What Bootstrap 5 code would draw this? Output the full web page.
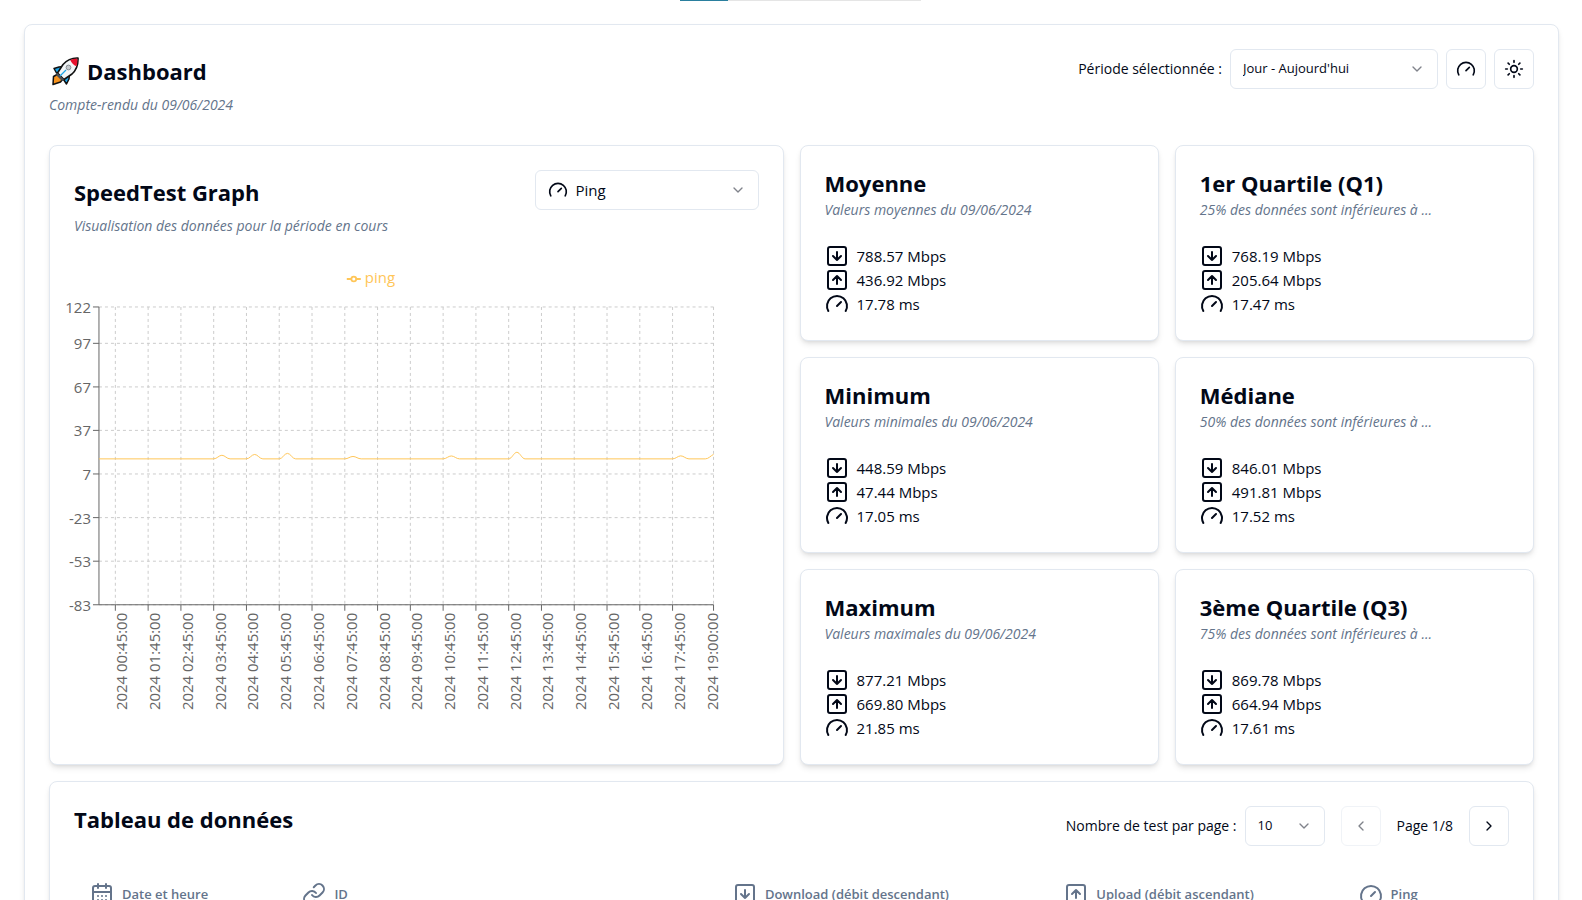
<!DOCTYPE html>
<html lang="fr">
<head>
<meta charset="utf-8">
<meta name="viewport" content="width=device-width, initial-scale=1">
<title>Dashboard</title>
<link rel="stylesheet" href="https://cdn.jsdelivr.net/npm/bootstrap@5.3.0/dist/css/bootstrap.min.css">
<style>
  :root { --line: #e2e8f0; --ink: #020817; --muted: #64748b; }
  body { font-family: "Open Sans", "Noto Sans", sans-serif; font-size: 15px; line-height: 24px; color: var(--ink); background: #fff; }
  .shell { padding: 24px 23px 24px 24px; }
  .panel { --bs-card-border-color: var(--line); --bs-card-border-radius: 8px; --bs-card-inner-border-radius: 7px; --bs-card-color: var(--ink);
    box-shadow: 0 4px 6px -1px rgba(0,0,0,.1), 0 2px 4px -2px rgba(0,0,0,.1); }
  .title { font-size: 22px; line-height: 26px; font-weight: 700; margin: 0; }
  .head-row { height: 42px; padding-top: 2px; }
  .sub { font-size: 14px; line-height: 20px; font-style: italic; color: var(--muted); margin: 4px 0 0; }
  .top-head { margin-bottom: 30px; }
  .tight { font-size: 14px; }
  .dash-grid { display: grid; grid-template-columns: repeat(4, minmax(0, 1fr)); gap: 16px; }
  .graph-panel { grid-column: span 2; grid-row: span 3; }
  .pick { height: 40px; border: 1px solid var(--line); border-radius: 6px; padding: 0 36px 0 12px; color: var(--ink); font-size: 13px;
    background-image: url("data:image/svg+xml,%3Csvg xmlns='http://www.w3.org/2000/svg' viewBox='0 0 24 24' fill='none' stroke='%23020817' stroke-opacity='.5' stroke-width='2' stroke-linecap='round' stroke-linejoin='round'%3E%3Cpath d='m6 9 6 6 6-6'/%3E%3C/svg%3E");
    background-size: 16px 16px; background-position: right 12px center; }
  .pick-period { width: 208px; }
  .pick-metric { width: 224px; padding-left: 40px; font-size: 15px; }
  .pick-rows { width: 80px; }
  .pick-icon { left: 13px; top: 10px; pointer-events: none; }
  .btn-icon { width: 40px; height: 40px; padding: 0; border: 1px solid var(--line); border-radius: 6px; color: var(--ink); background: #fff;
    display: inline-flex; align-items: center; justify-content: center; }
  .btn-icon:disabled { opacity: .5; border-color: var(--line); color: var(--ink); }
  .ico { width: 24px; height: 24px; fill: none; stroke: currentColor; stroke-width: 2; stroke-linecap: round; stroke-linejoin: round; flex: none; }
  .ico-20 { width: 20px; height: 20px; }
  .ico-16 { width: 16px; height: 16px; }
  .rocket { width: 30px; height: 30px; flex: none; }
  .load-bar { height: 1px; width: 241px; left: 43%; border-radius: 0; background: #e5e5e5; }
  .load-bar .progress-bar { background: #2a7f9e; }
  .data-table { table-layout: fixed; --bs-table-bg: transparent; border-color: var(--line); }
  .data-table th { height: 48px; padding: 0 16px; font-size: 13px; font-weight: 600; color: var(--muted); white-space: nowrap; vertical-align: middle; }
  .chart { display: block; width: 100%; height: auto; font-size: 15px; }
</style>
</head>
<body>
<svg class="d-none" aria-hidden="true">
  <symbol id="i-down" viewBox="0 0 24 24"><rect x="3" y="3" width="18" height="18" rx="2"/><path d="M12 8v8m-4-4 4 4 4-4"/></symbol>
  <symbol id="i-up" viewBox="0 0 24 24"><rect x="3" y="3" width="18" height="18" rx="2"/><path d="m16 12-4-4-4 4m4 4V8"/></symbol>
  <symbol id="i-gauge" viewBox="0 0 24 24"><path d="m12 14 4-4M3.34 19a10 10 0 1 1 17.32 0"/></symbol>
  <symbol id="i-sun" viewBox="0 0 24 24"><circle cx="12" cy="12" r="4"/><path d="M12 2v2m0 16v2M4.93 4.93l1.41 1.41m11.32 11.32 1.41 1.41M2 12h2m16 0h2M6.34 17.66l-1.41 1.41M19.07 4.93l-1.41 1.41"/></symbol>
  <symbol id="i-left" viewBox="0 0 24 24"><path d="m15 18-6-6 6-6"/></symbol>
  <symbol id="i-right" viewBox="0 0 24 24"><path d="m9 18 6-6-6-6"/></symbol>
  <symbol id="i-cal" viewBox="0 0 24 24"><rect x="3" y="4" width="18" height="18" rx="2"/><path d="M16 2v4M3 10h18M8 2v4m0 8h.01M12 14h.01M16 14h.01M8 18h.01M12 18h.01M16 18h.01"/></symbol>
  <symbol id="i-link" viewBox="0 0 24 24"><path d="M10 13a5 5 0 0 0 7.54.54l3-3a5 5 0 0 0-7.07-7.07l-1.72 1.71"/><path d="M14 11a5 5 0 0 0-7.54-.54l-3 3a5 5 0 0 0 7.07 7.07l1.71-1.71"/></symbol>
</svg>

<div class="progress load-bar position-absolute top-0" role="progressbar" aria-label="Chargement" aria-valuenow="20" aria-valuemin="0" aria-valuemax="100"><div class="progress-bar" style="width:20%"></div></div>

<div class="shell">
<main class="card panel p-4">
  <header class="top-head d-flex justify-content-between align-items-start">
    <div>
      <div class="head-row d-flex align-items-center gap-2">
        <svg class="rocket" viewBox="-1 0 30 30" aria-hidden="true">
          <path d="M3.5 20.5 8 18l5 5-2.500 3-7.500 2.500z" fill="#f7931e" stroke="#111" stroke-width="1.500" stroke-linejoin="round"/>
          <path d="M4 12.500 9 11l4-.500-4 6-2.500.500zM19.500 18l-.500 5-2.500 5-3-4.500.500-1z" fill="#1da5e8" stroke="#111" stroke-width="1.500" stroke-linejoin="round"/>
          <path d="M28 2c-7-.300-11.500 2.500-15 6.500l-5.500 8.500 6.500 6.500 8-5.500c4-3.500 6.300-9 6-16z" fill="#f2f5f7" stroke="#111" stroke-width="1.600" stroke-linejoin="round"/>
          <path d="M27.300 2.700c-3-.100-4.800.300-7.100 1.200 1.400 3.100 3.200 4.900 6.200 6.300 1-2.300 1.100-4.600.900-7.500z" fill="#e8112d"/>
          <path d="m7.500 17 6.500 6.500-2 1.500-6-6z" fill="#4a4f55"/>
          <circle cx="18.500" cy="11.500" r="2.400" fill="#c5c9cc" stroke="#8b9196"/>
          <path d="m10 20 6-6" stroke="#1da5e8" stroke-width="1.200"/>
        </svg>
        <h1 class="title">Dashboard</h1>
      </div>
      <p class="sub">Compte-rendu du 09/06/2024</p>
    </div>
    <div class="d-flex align-items-center gap-2">
      <label class="tight" for="period">Période sélectionnée :</label>
      <select class="form-select pick pick-period" id="period"><option>Jour - Aujourd'hui</option></select>
      <button class="btn btn-icon" type="button" aria-label="Lancer un test"><svg class="ico ico-20"><use href="#i-gauge"/></svg></button>
      <button class="btn btn-icon" type="button" aria-label="Changer de thème"><svg class="ico ico-20"><use href="#i-sun"/></svg></button>
    </div>
  </header>

  <div class="dash-grid">
    <section class="card panel graph-panel">
      <div class="p-4 d-flex justify-content-between align-items-start">
        <div>
          <div class="head-row d-flex align-items-center"><h2 class="title">SpeedTest Graph</h2></div>
          <p class="sub">Visualisation des données pour la période en cours</p>
        </div>
        <div class="position-relative">
          <svg class="ico ico-20 pick-icon position-absolute"><use href="#i-gauge"/></svg>
          <select class="form-select pick pick-metric" aria-label="Mesure affichée"><option>Ping</option></select>
        </div>
      </div>
      <svg class="chart" id="chart" viewBox="0 0 733 480" role="img" aria-label="Évolution du ping"></svg>
    </section>

    <section class="card panel p-4"><h2 class="title">Moyenne</h2><p class="sub mb-4">Valeurs moyennes du 09/06/2024</p>
      <div class="d-flex gap-2"><svg class="ico"><use href="#i-down"/></svg>788.57 Mbps</div>
      <div class="d-flex gap-2"><svg class="ico"><use href="#i-up"/></svg>436.92 Mbps</div>
      <div class="d-flex gap-2"><svg class="ico"><use href="#i-gauge"/></svg>17.78 ms</div></section>
    <section class="card panel p-4"><h2 class="title">1er Quartile (Q1)</h2><p class="sub mb-4">25% des données sont inférieures à ...</p>
      <div class="d-flex gap-2"><svg class="ico"><use href="#i-down"/></svg>768.19 Mbps</div>
      <div class="d-flex gap-2"><svg class="ico"><use href="#i-up"/></svg>205.64 Mbps</div>
      <div class="d-flex gap-2"><svg class="ico"><use href="#i-gauge"/></svg>17.47 ms</div></section>
    <section class="card panel p-4"><h2 class="title">Minimum</h2><p class="sub mb-4">Valeurs minimales du 09/06/2024</p>
      <div class="d-flex gap-2"><svg class="ico"><use href="#i-down"/></svg>448.59 Mbps</div>
      <div class="d-flex gap-2"><svg class="ico"><use href="#i-up"/></svg>47.44 Mbps</div>
      <div class="d-flex gap-2"><svg class="ico"><use href="#i-gauge"/></svg>17.05 ms</div></section>
    <section class="card panel p-4"><h2 class="title">Médiane</h2><p class="sub mb-4">50% des données sont inférieures à ...</p>
      <div class="d-flex gap-2"><svg class="ico"><use href="#i-down"/></svg>846.01 Mbps</div>
      <div class="d-flex gap-2"><svg class="ico"><use href="#i-up"/></svg>491.81 Mbps</div>
      <div class="d-flex gap-2"><svg class="ico"><use href="#i-gauge"/></svg>17.52 ms</div></section>
    <section class="card panel p-4"><h2 class="title">Maximum</h2><p class="sub mb-4">Valeurs maximales du 09/06/2024</p>
      <div class="d-flex gap-2"><svg class="ico"><use href="#i-down"/></svg>877.21 Mbps</div>
      <div class="d-flex gap-2"><svg class="ico"><use href="#i-up"/></svg>669.80 Mbps</div>
      <div class="d-flex gap-2"><svg class="ico"><use href="#i-gauge"/></svg>21.85 ms</div></section>
    <section class="card panel p-4"><h2 class="title">3ème Quartile (Q3)</h2><p class="sub mb-4">75% des données sont inférieures à ...</p>
      <div class="d-flex gap-2"><svg class="ico"><use href="#i-down"/></svg>869.78 Mbps</div>
      <div class="d-flex gap-2"><svg class="ico"><use href="#i-up"/></svg>664.94 Mbps</div>
      <div class="d-flex gap-2"><svg class="ico"><use href="#i-gauge"/></svg>17.61 ms</div></section>
  </div>

  <section class="card panel p-4 mt-3">
    <div class="d-flex justify-content-between align-items-start mb-4">
      <h2 class="title">Tableau de données</h2>
      <div class="d-flex align-items-center gap-3">
        <div class="d-flex align-items-center gap-2">
          <label class="tight" for="rows">Nombre de test par page :</label>
          <select class="form-select pick pick-rows" id="rows"><option>10</option></select>
        </div>
        <button class="btn btn-icon" type="button" disabled aria-label="Page précédente"><svg class="ico ico-16"><use href="#i-left"/></svg></button>
        <span class="tight">Page 1/8</span>
        <button class="btn btn-icon" type="button" aria-label="Page suivante"><svg class="ico ico-16"><use href="#i-right"/></svg></button>
      </div>
    </div>
    <table class="table data-table mb-0">
      <colgroup><col style="width:14.8%"><col style="width:30%"><col style="width:23.1%"><col style="width:20.5%"><col style="width:11.6%"></colgroup>
      <thead><tr>
        <th scope="col"><div class="d-flex align-items-center gap-2"><svg class="ico"><use href="#i-cal"/></svg>Date et heure</div></th>
        <th scope="col"><div class="d-flex align-items-center gap-2"><svg class="ico"><use href="#i-link"/></svg>ID</div></th>
        <th scope="col"><div class="d-flex align-items-center gap-2"><svg class="ico"><use href="#i-down"/></svg>Download (débit descendant)</div></th>
        <th scope="col"><div class="d-flex align-items-center gap-2"><svg class="ico"><use href="#i-up"/></svg>Upload (débit ascendant)</div></th>
        <th scope="col"><div class="d-flex align-items-center gap-2"><svg class="ico"><use href="#i-gauge"/></svg>Ping</div></th>
      </tr></thead>
    </table>
  </section>
</main>
</div>

<script src="https://cdn.jsdelivr.net/npm/bootstrap@5.3.0/dist/js/bootstrap.bundle.min.js"></script>
<script>
  // Ping chart: one sample every 15 minutes, one tick per hour.
  const left = 49, right = 664, top0 = 47, bottom = 345, step = 8.2;
  const yTicks = [[122, 47], [97, 83.4], [67, 127], [37, 170.5], [7, 214.1], [-23, 257.8], [-53, 301.4], [-83, 345]];
  const xTicks = [];
  for (let h = 0; h < 18; h++) xTicks.push([String(h).padStart(2, '0') + ':45:00', left + step * (2 + 4 * h), 12]);
  xTicks.push(['19:00:00', right, 4]);

  let grid = '', axis = '', text = '';
  for (const [label, y] of yTicks) {
    grid += `<path d="M${left} ${y}H${right}"/>`;
    axis += `<path d="M${left - 6} ${y}h6"/>`;
    text += `<text x="${left - 8}" y="${y + 6}" text-anchor="end">${label}</text>`;
  }
  for (const [label, x, shift] of xTicks) {
    grid += `<path d="M${x} ${top0}V${bottom}"/>`;
    axis += `<path d="M${x} ${bottom}v6"/>`;
    text += `<text transform="translate(${x + shift} ${bottom + 8}) rotate(-90)" text-anchor="end">2024 ${label}</text>`;
  }
  // Samples that rise above the baseline: [index, height]
  const base = 199;
  let line = `M${left} ${base}`;
  for (const [i, up] of [[15, 3.6], [19, 4.4], [23, 5.5], [31, 2.4], [43, 2.9], [51, 6.6], [71, 3]]) {
    const x = left + i * step, p = base - up;
    line += `H${x - step}C${x - 5} ${base} ${x - 3} ${p} ${x} ${p}S${x + 5} ${base} ${x + step} ${base}`;
  }
  line += `H${right - step}C${right - 5} ${base} ${right - 3} 196 ${right} 194.500`;

  document.getElementById('chart').innerHTML =
    `<g stroke="#ccc" stroke-dasharray="3 3" fill="none">${grid}</g>
     <g stroke="#666" fill="none">${axis}<path d="M${left} ${top0}V${bottom}H${right}"/></g>
     <g fill="#666">${text}</g>
     <path d="${line}" fill="none" stroke="#ffc658"/>
     <g stroke="#ffc658" stroke-width="1.800" fill="none"><path d="M297 19h4.500m5 0h4.500"/><circle cx="304" cy="19" r="2.400"/></g>
     <text x="315" y="23" fill="#ffc658">ping</text>`;
</script>
</body>
</html>
